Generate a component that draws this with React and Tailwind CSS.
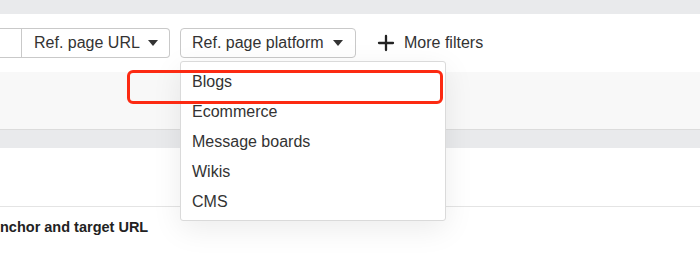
import { Plus } from "lucide-react";

const Caret = () => (
  <svg width="10" height="6" viewBox="0 0 10 6" className="shrink-0">
    <path d="M0 0 H10 L5 6 Z" fill="#333" />
  </svg>
);

const platforms = ["Blogs", "Ecommerce", "Message boards", "Wikis", "CMS"];

export default function App() {
  return (
    <div
      className="relative w-[700px] h-[273px] overflow-hidden bg-white text-[#333]"
      style={{ fontFamily: '"Liberation Sans", Arial, sans-serif' }}
    >
      {/* top strip */}
      <div className="h-[14px] bg-[#e9eaec]" />

      {/* filters bar */}
      <div className="h-[58px] pt-[14px] flex items-start">
        <div className="flex">
          <div className="w-[22px] h-[30px] border-y border-r border-[#c9c9c9]" />
          <button className="h-[30px] w-[148px] pl-[12px] pr-[11px] flex items-center justify-between border-y border-r border-[#c9c9c9] rounded-r-[4px] text-[16px]">
            <span>Ref. page URL</span>
            <Caret />
          </button>
        </div>
        <button className="ml-[10px] h-[30px] w-[176px] pl-[11px] pr-[12px] flex items-center justify-between border border-[#c9c9c9] rounded-[4px] text-[16px]">
          <span>Ref. page platform</span>
          <Caret />
        </button>
        <div className="ml-[18px] h-[30px] flex items-center gap-[6px] text-[16px]">
          <Plus size={24} strokeWidth={2.3} color="#222" />
          <span>More filters</span>
        </div>
      </div>

      {/* light band */}
      <div className="h-[58px] bg-[#f8f8f8] border-b border-[#dcdcdc]" />
      <div className="h-[18px] bg-[#e9eaec]" />
      <div className="h-[59px] border-b border-[#e4e4e4]" />
      <div className="pt-[10px] text-[14.5px] font-bold text-[#222]">nchor and target URL</div>

      {/* dropdown */}
      <div className="absolute left-[180px] top-[61px] w-[266px] h-[160px] bg-white border border-[#dadada] rounded-[3px] pt-[5px] shadow-[0_8px_30px_rgba(0,0,0,0.08)]">
        {platforms.map((p) => (
          <div key={p} className="h-[30px] pl-[11px] flex items-center text-[16px]">
            {p}
          </div>
        ))}
      </div>

      {/* highlight annotation */}
      <div className="absolute left-[127px] top-[70px] w-[316px] h-[34px] border-[3px] border-[#fc2a12] rounded-[6px]" />
    </div>
  );
}
